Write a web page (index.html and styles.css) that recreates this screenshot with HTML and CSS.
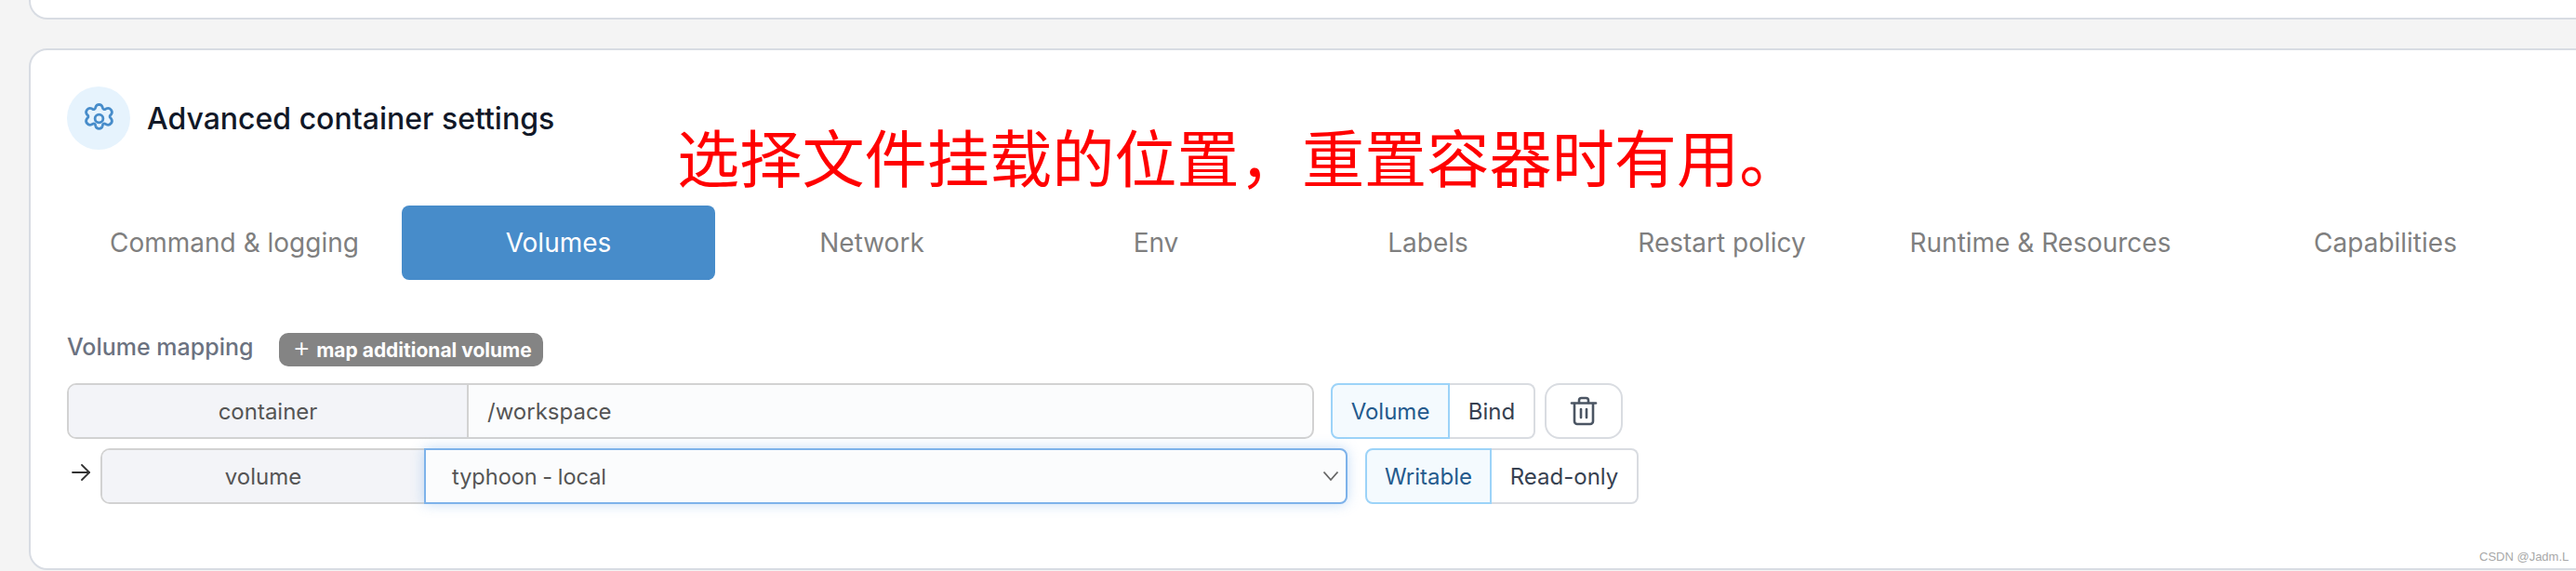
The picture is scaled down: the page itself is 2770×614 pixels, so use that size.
FILE: index.html
```html
<!DOCTYPE html>
<html lang="en">
<head>
<meta charset="utf-8">
<title>Advanced container settings</title>
<link rel="stylesheet" href="styles.css">
</head>
<body>
<div class="page">
  <div class="card card-top"></div>
  <section class="card card-main">
    <header class="head">
      <span class="head-icon">
        <svg width="35" height="35" viewBox="0 0 24 24" fill="none" stroke="currentColor" stroke-width="1.9" stroke-linecap="round" stroke-linejoin="round"><path d="M12 1.6a2.6 2.6 0 0 1 2.5 1.9l.2.8a1.3 1.3 0 0 0 1.9.8l.7-.4a2.9 2.9 0 0 1 3.7 4.2l-.6.6a1.3 1.3 0 0 0 0 2l.6.6a2.9 2.9 0 0 1-3.7 4.2l-.7-.4a1.3 1.3 0 0 0-1.9.8l-.2.8a2.6 2.6 0 0 1-5 0l-.2-.8a1.3 1.3 0 0 0-1.9-.8l-.7.4a2.9 2.9 0 0 1-3.7-4.2l.6-.6a1.3 1.3 0 0 0 0-2l-.6-.6a2.9 2.9 0 0 1 3.7-4.2l.7.4a1.3 1.3 0 0 0 1.9-.8l.2-.8A2.6 2.6 0 0 1 12 1.6z"/><circle cx="12" cy="12" r="3"/></svg>
      </span>
      <h2 class="head-title">Advanced container settings</h2>
    </header>
    <nav class="tabs">
      <a class="tab">Command &amp; logging</a>
      <a class="tab tab-active">Volumes</a>
      <a class="tab">Network</a>
      <a class="tab">Env</a>
      <a class="tab">Labels</a>
      <a class="tab">Restart policy</a>
      <a class="tab">Runtime &amp; Resources</a>
      <a class="tab">Capabilities</a>
    </nav>
    <div class="mapping-head">
      <span class="mapping-label">Volume mapping</span>
      <span class="add-badge"><span class="plus">+</span> map additional volume</span>
    </div>
    <div class="row">
      <div class="group group-path">
        <span class="addon addon-path">container</span>
        <input class="field" type="text" value="/workspace">
      </div>
      <div class="toggle">
        <span class="opt opt-on opt-volume">Volume</span>
        <span class="opt opt-bind">Bind</span>
      </div>
      <button class="trash" type="button" aria-label="Remove">
        <svg width="30" height="32" viewBox="0 0 30 32" fill="none" stroke="currentColor" stroke-width="2.6" stroke-linecap="round" stroke-linejoin="round"><path d="M2 7.5h26"/><path d="M10 7V4.5A2.5 2.5 0 0 1 12.5 2h5A2.5 2.5 0 0 1 20 4.5V7"/><path d="M5 8v19a3 3 0 0 0 3 3h14a3 3 0 0 0 3-3V8"/><path d="M12 14v9"/><path d="M18 14v9"/></svg>
      </button>
    </div>
    <div class="row row-second">
      <span class="arrow">
        <svg width="22" height="22" viewBox="0 0 22 22" fill="none" stroke="currentColor" stroke-width="1.8" stroke-linecap="round" stroke-linejoin="round"><path d="M2 11h18"/><path d="M12 3l8 8-8 8"/></svg>
      </span>
      <div class="group group-select">
        <span class="addon addon-select">volume</span>
        <div class="select" role="combobox" aria-expanded="false">
          <span>typhoon - local</span>
          <svg class="chevron" width="18" height="12" viewBox="0 0 18 12" fill="none" stroke="currentColor" stroke-width="1.8"><path d="M1.5 1.5L9 10l7.5-8.5"/></svg>
        </div>
      </div>
      <div class="toggle toggle-second">
        <span class="opt opt-on opt-writable">Writable</span>
        <span class="opt opt-readonly">Read-only</span>
      </div>
    </div>
  </section>
  <p class="note">选择文件挂载的位置，重置容器时有用。</p>
  <span class="mark">CSDN @Jadm.L</span>
</div>
</body>
</html>
```

FILE: styles.css
```css
* { box-sizing: border-box; }
html, body { margin: 0; padding: 0; }
body {
  background: #f4f4f4;
  font-family: Inter, "Noto Sans CJK SC", sans-serif;
  overflow: hidden;
  width: 2770px;
  height: 614px;
}
.page {
  position: relative;
  width: 2770px;
  height: 614px;
  padding-left: 31px;
  overflow: hidden;
}
.card {
  width: 2790px;
  background: #fff;
  border: 2px solid #d8dce3;
}
.card-top {
  height: 21px;
  border-top: 0;
  border-radius: 0 0 20px 20px;
}
.card-main {
  margin-top: 31px;
  height: 561px;
  border-radius: 20px;
  padding: 39px 0 0 39px;
}
.head { display: flex; align-items: center; gap: 18px; }
.head-icon {
  width: 68px;
  height: 68px;
  border-radius: 50%;
  background: #e6f3fd;
  color: #478cca;
  display: flex;
  align-items: center;
  justify-content: center;
}
.head-title {
  margin: 0;
  font-size: 32px;
  font-weight: 500;
  color: #111827;
}
.tabs {
  display: grid;
  grid-template-columns: 360px 337px 337px 274px 311px 321px 364px 378px;
  margin-top: 60px;
  height: 80px;
}
.tab {
  display: flex;
  align-items: center;
  justify-content: center;
  font-size: 28px;
  color: #7f7f7f;
  border-radius: 8px;
}
.tab-active { background: #478cca; color: #fff; }
.mapping-head {
  display: flex;
  align-items: center;
  gap: 27px;
  margin-top: 57px;
  height: 36px;
}
.mapping-label {
  font-size: 25px;
  font-weight: 500;
  color: #6b7280;
  padding-bottom: 6px;
}
.add-badge {
  display: flex;
  align-items: center;
  gap: 6px;
  height: 36px;
  padding: 0 12px 0 15px;
  border-radius: 10px;
  background: #848484;
  color: #fff;
  font-size: 21px;
  font-weight: 700;
}
.plus { font-weight: 300; font-size: 30px; line-height: 26px; margin-top: -6px; }
.row { display: flex; align-items: stretch; height: 60px; margin-top: 18px; }
.row-second { margin-top: 10px; }
.group {
  display: flex;
  border: 2px solid #d2d2d2;
  border-radius: 10px;
  background: #fbfcfd;
}
.group-path { width: 1341px; }
.group-select { width: 1341px; border-right: 0; }
.addon {
  display: flex;
  align-items: center;
  justify-content: center;
  background: #f3f4f8;
  color: #555;
  font-size: 24px;
  border-radius: 8px 0 0 8px;
}
.addon-path { width: 430px; border-right: 2px solid #d2d2d2; }
.addon-select { width: 346px; }
.field {
  flex: 1;
  min-width: 0;
  border: 0;
  outline: 0;
  background: transparent;
  padding: 0 0 0 20px;
  font: 400 24px Inter, sans-serif;
  color: #555;
  border-radius: 0 8px 8px 0;
}
.select {
  flex: 1;
  display: flex;
  align-items: center;
  justify-content: space-between;
  margin: -2px 0;
  background: #fbfcfd;
  border: 2px solid #7db2ea;
  border-radius: 0 8px 8px 0;
  box-shadow: 0 0 14px rgba(125, 178, 234, .45);
  padding: 0 7px 0 28px;
  font-size: 23.5px;
  word-spacing: -1px;
  color: #555;
}
.chevron { color: #666; }
.arrow { width: 36px; display: flex; align-items: center; padding: 0 0 8px 4px; color: #333; }
.toggle { display: flex; margin-left: 18px; font-size: 24px; }
.toggle-second { margin-left: 19px; }
.opt {
  display: flex;
  align-items: center;
  justify-content: center;
  border: 2px solid #d9dce1;
  color: #374151;
}
.opt-on {
  background: #f4fafe;
  border-color: #9cd3f8;
  color: #245a8d;
  border-radius: 8px 0 0 8px;
}
.opt-volume { width: 128px; }
.opt-bind { width: 92px; border-left: 0; border-radius: 0 8px 8px 0; }
.opt-writable { width: 136px; }
.opt-readonly { width: 158px; border-left: 0; border-radius: 0 8px 8px 0; }
.trash {
  width: 84px;
  margin-left: 10px;
  background: #fff;
  border: 2px solid #d9dce1;
  border-radius: 16px;
  color: #4b5563;
  padding: 0;
  display: flex;
  align-items: center;
  justify-content: center;
}
.note {
  position: absolute;
  left: 728px;
  top: 128px;
  margin: 0;
  font-size: 67.2px;
  line-height: 78px;
  color: #ff0000;
  font-family: "Noto Sans CJK SC", sans-serif;
  white-space: nowrap;
}
.mark {
  position: absolute;
  left: 2666px;
  top: 591px;
  font-size: 13px;
  line-height: 16px;
  color: #a8a8a8;
  font-family: "Liberation Sans", sans-serif;
}
```
